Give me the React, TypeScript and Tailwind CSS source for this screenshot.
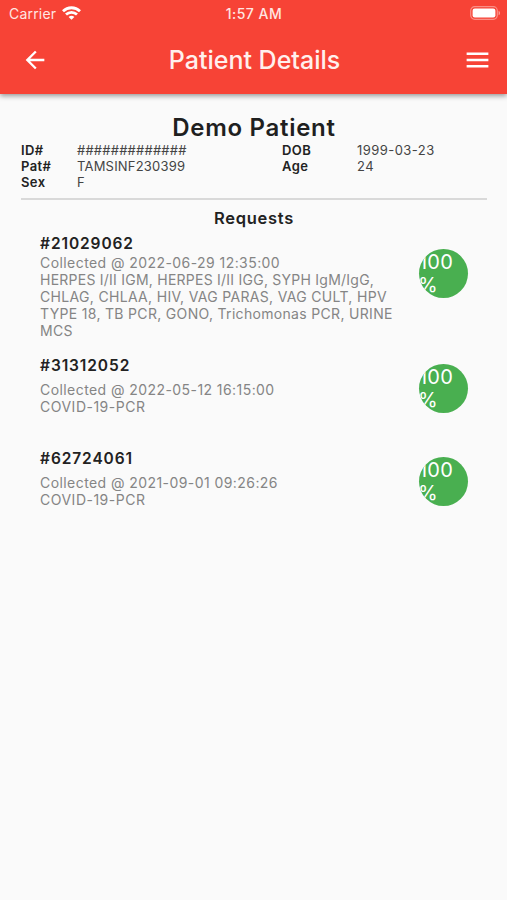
import React from 'react';
import clsx from 'clsx';

const REQUESTS = [
  {
    id: '#21029062',
    collected: '2022-06-29 12:35:00',
    tests: [
      'HERPES I/II IGM, HERPES I/II IGG, SYPH IgM/IgG,',
      'CHLAG, CHLAA, HIV, VAG PARAS, VAG CULT, HPV',
      'TYPE 18, TB PCR, GONO, Trichomonas PCR, URINE',
      'MCS',
    ],
  },
  {
    id: '#31312052',
    collected: '2022-05-12 16:15:00',
    tests: ['COVID-19-PCR'],
  },
  {
    id: '#62724061',
    collected: '2021-09-01 09:26:26',
    tests: ['COVID-19-PCR'],
  },
];

const StatusBar = () => (
  <div className="grid grid-cols-3 items-center h-[27px] pl-[9px] pr-[8px] text-[14px] text-[#ffe6e2]">
    <div className="flex items-center gap-[6px]">
      <span className="tracking-[0.2px]">Carrier</span>
      <svg className="-mt-px" width="19" height="14" viewBox="0 0 19 14" fill="none" stroke="#fff" strokeWidth="2.8">
        <path d="M1 5.2C5.8.6 13.2.6 18 5.2" />
        <path d="M4 8.6c3.2-3 7.8-3 11 0" />
        <path d="M9.5 13.8 6.6 10.9c1.7-1.5 4.1-1.5 5.8 0z" fill="#fff" stroke="none" />
      </svg>
    </div>
    <span className="text-center font-medium tracking-[0.5px] whitespace-nowrap">1:57 AM</span>
    <svg className="justify-self-end -mr-[2px] -mt-px" width="31" height="14" viewBox="0 0 31 14">
      <rect x="0.7" y="0.7" width="26.6" height="12.6" rx="4" fill="none" stroke="#fff" strokeOpacity="0.4" strokeWidth="1.2" />
      <rect x="2.6" y="2.6" width="22.8" height="8.8" rx="2.2" fill="#fff" />
      <path d="M28.6 4.7v4.6c1.9-.8 1.9-3.8 0-4.6z" fill="#fff" fillOpacity="0.5" />
    </svg>
  </div>
);

const AppBar = () => (
  <header className="h-[94px] bg-[#f74336] shadow-[0_2px_5px_rgba(0,0,0,0.4)]">
    <StatusBar />
    <div className="flex items-center justify-between h-[65px] pl-[21px] pr-[15px]">
      <button aria-label="Back">
        <svg className="block" width="28" height="28" viewBox="0 0 24 24" fill="#fff">
          <path d="M20 11H7.83l5.59-5.59L12 4l-8 8 8 8 1.41-1.41L7.83 13H20v-2z" />
        </svg>
      </button>
      <h1 className="pt-[2px] pr-[3px] text-[25px] leading-none font-medium text-[#fff0ed] whitespace-nowrap">Patient Details</h1>
      <button aria-label="Menu">
        <svg className="block" width="29" height="30" viewBox="0 0 24 24" fill="#fff" preserveAspectRatio="none">
          <path d="M3 18h18v-2H3v2zm0-5h18v-2H3v2zm0-7v2h18V6H3z" />
        </svg>
      </button>
    </div>
  </header>
);

const Request = ({ request, compact }: { request: typeof REQUESTS[number]; compact: boolean }) => (
  <li className={clsx('flex justify-between', compact ? 'h-[93px]' : 'h-[122px]')}>
    <div>
      <h3 className="text-[15.5px] leading-[18px] font-semibold tracking-[0.9px] text-[#222]">{request.id}</h3>
      <div className={clsx('text-[14px] leading-[17px] text-[#858585] whitespace-nowrap', compact ? 'mt-[6px]' : 'mt-px')}>
        <p className="tracking-[0.43px]">Collected @ {request.collected}</p>
        {request.tests.map((line, i) => (
          <p
            key={line}
            className={compact ? 'tracking-[0.5px]' : i === 0 ? 'tracking-[0.24px]' : 'tracking-[0.32px]'}
          >
            {line}
          </p>
        ))}
      </div>
    </div>
    <div
      className={clsx(
        'w-[49px] h-[49px] shrink-0 rounded-full overflow-hidden bg-[#49af50] text-white text-[20px] leading-[23px]',
        compact ? 'mt-[7px]' : 'mt-[14px]'
      )}
    >
      <div className="pt-[2px] tracking-[0.2px]">100</div>
      <div className="-ml-px">%</div>
    </div>
  </li>
);

export default function App() {
  return (
    <div className="w-full min-h-screen bg-[#fafafa] font-['Inter',sans-serif]">
      <AppBar />
      <main className="pt-[20px] px-[20px]">
        <h2 className="pl-px text-center text-[24px] leading-[28px] font-semibold tracking-[0.7px] text-[#1f1f1f]">Demo Patient</h2>
        <div className="grid grid-cols-[56px_205px_75px_1fr] pl-px text-[13px] leading-[16px] text-[#444]">
          <b className="font-semibold text-[#222] tracking-[0.4px]">ID#</b>
          <span className="tracking-[0.2px]">#############</span>
          <b className="font-semibold text-[#222] tracking-[0.4px]">DOB</b>
          <span className="tracking-[0.45px]">1999-03-23</span>
          <b className="font-semibold text-[#222] tracking-[0.4px]">Pat#</b>
          <span className="tracking-[0.2px]">TAMSINF230399</span>
          <b className="font-semibold text-[#222] tracking-[0.4px]">Age</b>
          <span className="tracking-[0.4px]">24</span>
          <b className="font-semibold text-[#222] tracking-[0.4px]">Sex</b>
          <span>F</span>
        </div>
        <hr className="mt-[8px] ml-px border-0 h-[2px] bg-[#d9d9d9]" />
        <h3 className="mt-[8px] pl-px text-center text-[16.5px] leading-[20px] font-semibold tracking-[0.7px] text-[#222]">Requests</h3>
        <ul className="mt-[7px] pl-[20px] pr-[19px]">
          {REQUESTS.map((request) => (
            <Request key={request.id} request={request} compact={request.tests.length === 1} />
          ))}
        </ul>
      </main>
    </div>
  );
}
